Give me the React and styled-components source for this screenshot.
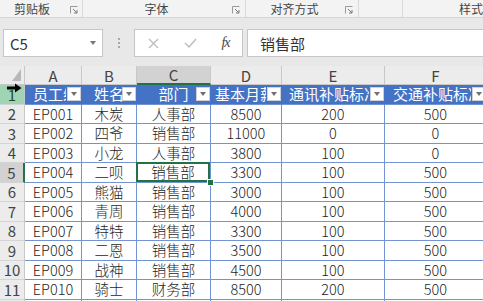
import React from "react";
import styled, { createGlobalStyle } from "styled-components";

const GlobalStyle = createGlobalStyle`
  html, body {
    margin: 0;
    padding: 0;
  }
  body {
    width: 483px;
    height: 301px;
    overflow: hidden;
    background: #ffffff;
    font-family: "Noto Sans CJK SC", "Liberation Sans", sans-serif;
  }
`;

const Window = styled.div`
  width: 483px;
  height: 301px;
  overflow: hidden;
  display: flex;
  flex-direction: column;
  background: #ffffff;
`;

const Ribbon = styled.div`
  display: flex;
  height: 18px;
  flex-shrink: 0;
  background: #f3f3f3;
  border-bottom: 1px solid #d4d4d4;
  box-sizing: border-box;
`;

const Group = styled.div`
  display: flex;
  align-items: center;
  width: ${(p) => p.$w}px;
  flex-shrink: 0;
  padding-right: ${(p) => p.$pr || 0}px;
  border-right: ${(p) => (p.$last ? "none" : "1px solid #d8d8d8")};
  box-sizing: border-box;
`;

const GroupLabel = styled.span`
  flex: 1;
  text-align: ${(p) => p.$align || "center"};
  padding-right: ${(p) => p.$shift || 0}px;
  font-size: 12px;
  line-height: 17px;
  color: #444444;
  white-space: nowrap;
`;

const Launcher = styled.svg`
  width: 8px;
  height: 8px;
  margin-top: 2px;
  flex-shrink: 0;
`;

const FormulaArea = styled.div`
  display: flex;
  align-items: flex-start;
  height: 48px;
  flex-shrink: 0;
  padding: 11px 0 0 3px;
  box-sizing: border-box;
  background: #e8e8e8;
`;

const NameBox = styled.div`
  display: flex;
  align-items: center;
  justify-content: space-between;
  width: 100px;
  height: 28px;
  padding: 0 6px 0 6px;
  box-sizing: border-box;
  background: #ffffff;
  border: 1px solid #c6c6c6;
  font-size: 15px;
  color: #333333;
`;

const DropArrow = styled.span`
  width: 0;
  height: 0;
  border-left: 3.5px solid transparent;
  border-right: 3.5px solid transparent;
  border-top: 4px solid #777777;
`;

const Grip = styled.div`
  width: 31px;
  height: 28px;
  display: flex;
  flex-direction: column;
  align-items: center;
  justify-content: center;
  gap: 2px;
`;

const GripDot = styled.span`
  width: 2px;
  height: 2px;
  background: #a8a8a8;
`;

const ActionBox = styled.div`
  display: flex;
  align-items: center;
  width: 109px;
  height: 28px;
  box-sizing: border-box;
  background: #ffffff;
  border: 1px solid #c6c6c6;
`;

const ActionIcon = styled.span`
  width: ${(p) => p.$w}px;
  display: flex;
  justify-content: center;
  align-items: center;
`;

const Fx = styled.span`
  font-family: "Liberation Serif", serif;
  font-style: italic;
  font-size: 14px;
  color: #444444;
  letter-spacing: -1px;
`;

const FormulaInput = styled.div`
  flex: 1;
  height: 28px;
  margin-left: 4px;
  margin-right: -2px;
  display: flex;
  align-items: center;
  padding-left: 12px;
  box-sizing: border-box;
  background: #ffffff;
  border: 1px solid #c6c6c6;
  font-size: 15px;
  color: #333333;
`;

const Sheet = styled.div`
  position: relative;
  display: grid;
  grid-template-columns: 25px 57px 55px 74px 71px 103px 102px;
  grid-template-rows: 19px repeat(12, 19.5px);
  width: 487px;
`;

const Corner = styled.div`
  display: flex;
  align-items: flex-end;
  justify-content: flex-end;
  padding: 0 3px 3px 0;
  background: #ececec;
  border-right: 1px solid #c8c8c8;
  border-bottom: 1px solid #c8c8c8;
  box-sizing: border-box;
`;

const ColHead = styled.div`
  display: flex;
  align-items: center;
  justify-content: center;
  background: ${(p) => (p.$active ? "#d2d2d2" : "#ececec")};
  border-right: 1px solid #c8c8c8;
  border-bottom: ${(p) => (p.$active ? "2px solid #217346" : "1px solid #c8c8c8")};
  box-sizing: border-box;
  font-size: 15px;
  line-height: 1;
  color: #444444;
`;

const RowHead = styled.div`
  display: flex;
  align-items: center;
  justify-content: center;
  background: ${(p) => (p.$hover ? "#9fd4b4" : p.$active ? "#d2d2d2" : "#ececec")};
  border-right: ${(p) => (p.$active ? "2px solid #217346" : "1px solid #c8c8c8")};
  border-bottom: 1px solid #d4d4d4;
  box-sizing: border-box;
  font-size: 15px;
  line-height: 1;
  color: ${(p) => (p.$hover ? "#2b4a36" : "#444444")};
`;

const HeadCell = styled.div`
  position: relative;
  display: flex;
  align-items: center;
  justify-content: ${(p) => (p.$pad != null ? "flex-start" : "center")};
  padding-left: ${(p) => p.$pad || 0}px;
  background: #4472c4;
  border-right: 1px solid #4472c4;
  border-bottom: 1px solid #7393d3;
  box-sizing: border-box;
  min-width: 0;
`;

const HeadText = styled.span`
  display: block;
  overflow: ${(p) => (p.$clip ? "hidden" : "visible")};
  white-space: nowrap;
  max-width: ${(p) => (p.$clip ? "calc(100% - 15px)" : "none")};
  height: 22px;
  font-size: 15px;
  line-height: 22px;
  color: #ffffff;
`;

const FilterButton = styled.span`
  position: absolute;
  right: 0;
  top: 2px;
  width: 14px;
  height: 14px;
  display: flex;
  align-items: center;
  justify-content: center;
  background: #ffffff;
  border: 1px solid #d0d0d0;
  box-sizing: border-box;

  &::after {
    content: "";
    border-left: 3.5px solid transparent;
    border-right: 3.5px solid transparent;
    border-top: 4px solid #707070;
  }
`;

const Cell = styled.div`
  position: relative;
  display: flex;
  align-items: center;
  justify-content: center;
  border-right: 1px solid #7393d3;
  border-bottom: 1px solid #7393d3;
  box-sizing: border-box;
  font-size: 14.5px;
  font-weight: 300;
  line-height: 1;
  color: #1e1e1e;
  white-space: nowrap;
  box-shadow: ${(p) => (p.$selected ? "inset 0 0 0 2px #217346" : "none")};
  margin: ${(p) => (p.$selected ? "-1px 0 0 -1px" : "0")};
  z-index: ${(p) => (p.$selected ? 2 : 0)};

  &::after {
    content: "";
    display: ${(p) => (p.$selected ? "block" : "none")};
    position: absolute;
    right: -4px;
    bottom: -4px;
    width: 5px;
    height: 5px;
    background: #217346;
    border: 1px solid #ffffff;
  }
`;

const Cursor = styled.svg`
  position: absolute;
  left: 7px;
  top: 17px;
  width: 15px;
  height: 10px;
  z-index: 3;
`;

const groups = [
  { label: "剪贴板", w: 83, pr: 4, shift: 6, launcher: true },
  { label: "字体", w: 163, pr: 5, shift: 2, launcher: true },
  { label: "对齐方式", w: 113, pr: 5, shift: 2, launcher: true },
  { label: "", w: 44 },
  { label: "样式", w: 90, pr: 10, align: "right", last: true },
];

const columns = ["A", "B", "C", "D", "E", "F"];

const headers = [
  { text: "员工编号", pad: 8 },
  { text: "姓名" },
  { text: "部门" },
  { text: "基本月薪", pad: 4 },
  { text: "通讯补贴标准", pad: 7 },
  { text: "交通补贴标准", pad: 8 },
];

const rows = [
  ["EP001", "木炭", "人事部", "8500", "200", "500"],
  ["EP002", "四爷", "销售部", "11000", "0", "0"],
  ["EP003", "小龙", "人事部", "3800", "100", "0"],
  ["EP004", "二呗", "销售部", "3300", "100", "500"],
  ["EP005", "熊猫", "销售部", "3000", "100", "500"],
  ["EP006", "青周", "销售部", "4000", "100", "500"],
  ["EP007", "特特", "销售部", "3300", "100", "500"],
  ["EP008", "二恩", "销售部", "3500", "100", "500"],
  ["EP009", "战神", "销售部", "4500", "100", "500"],
  ["EP010", "骑士", "财务部", "8500", "200", "500"],
  ["EP011", "老猫", "销售部", "3300", "100", "500"],
];

function LauncherIcon() {
  return (
    <Launcher viewBox="0 0 8 8">
      <path d="M0.5 7.5 V0.5 H7.5" fill="none" stroke="#9a9a9a" strokeWidth="1" />
      <path d="M3 3 L7 7 M4 7 H7 V4" fill="none" stroke="#7a7a7a" strokeWidth="1" />
    </Launcher>
  );
}

export default function App() {
  return (
    <Window>
      <GlobalStyle />
      <Ribbon>
        {groups.map((g, i) => (
          <Group key={i} $w={g.w} $pr={g.pr} $last={g.last}>
            <GroupLabel $align={g.align} $shift={g.shift}>
              {g.label}
            </GroupLabel>
            {g.launcher && <LauncherIcon />}
          </Group>
        ))}
      </Ribbon>

      <FormulaArea>
        <NameBox>
          <span>C5</span>
          <DropArrow />
        </NameBox>
        <Grip>
          <GripDot />
          <GripDot />
          <GripDot />
        </Grip>
        <ActionBox>
          <ActionIcon $w={36}>
            <svg width="11" height="11" viewBox="0 0 11 11">
              <path d="M1 1 L10 10 M10 1 L1 10" stroke="#bdbdbd" strokeWidth="1.3" />
            </svg>
          </ActionIcon>
          <ActionIcon $w={38}>
            <svg width="13" height="10" viewBox="0 0 13 10">
              <path d="M1 5 L5 9 L12 1" fill="none" stroke="#bdbdbd" strokeWidth="1.4" />
            </svg>
          </ActionIcon>
          <ActionIcon $w={33}>
            <Fx>fx</Fx>
          </ActionIcon>
        </ActionBox>
        <FormulaInput>销售部</FormulaInput>
      </FormulaArea>

      <Sheet>
        <Corner>
          <svg width="9" height="12" viewBox="0 0 9 12">
            <path d="M9 0 V12 H0 Z" fill="#b8b8b8" />
          </svg>
        </Corner>
        {columns.map((c) => (
          <ColHead key={c} $active={c === "C"}>
            {c}
          </ColHead>
        ))}

        <RowHead $hover>1</RowHead>
        {headers.map((h) => (
          <HeadCell key={h.text} $pad={h.pad}>
            <HeadText $clip={h.pad != null}>{h.text}</HeadText>
            <FilterButton />
          </HeadCell>
        ))}

        {rows.map((r, i) => {
          const n = i + 2;
          return (
            <React.Fragment key={n}>
              <RowHead $active={n === 5}>{n}</RowHead>
              {r.map((v, j) => (
                <Cell key={j} $selected={n === 5 && j === 2}>
                  {v}
                </Cell>
              ))}
            </React.Fragment>
          );
        })}

        <Cursor viewBox="0 0 15 10">
          <path d="M0 3.6 H8 V0.5 L14.5 5 L8 9.5 V6.4 H0 Z" fill="#000000" />
        </Cursor>
      </Sheet>
    </Window>
  );
}
